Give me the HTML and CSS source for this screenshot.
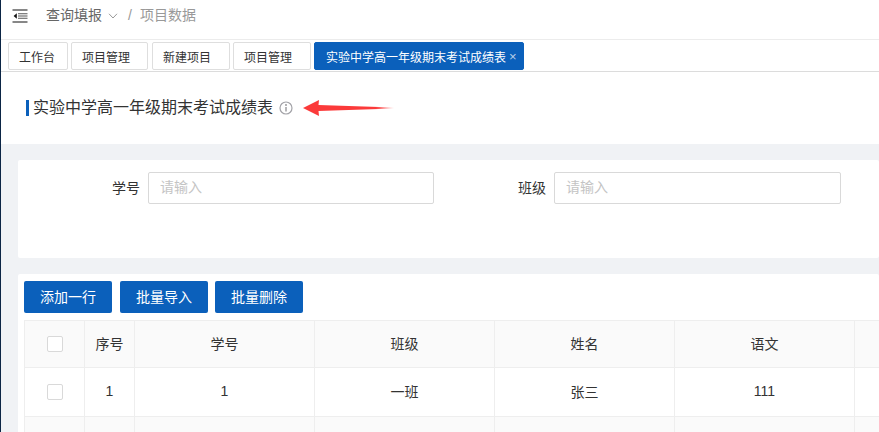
FILE: index.html
```html
<!DOCTYPE html>
<html lang="zh">
<head>
<meta charset="utf-8">
<title>实验中学高一年级期末考试成绩表</title>
<link rel="stylesheet" href="styles.css">
</head>
<body>
<div class="page">
  <header class="topbar">
    <svg class="menu-icon" width="16" height="14" viewBox="0 0 16 14"><path d="M.5 1h15M.5 13h15" stroke="#111" stroke-width="1.200" fill="none"/><path d="M6 4.800h9.500M6 7h9.500M6 9.200h9.500" stroke="#555" stroke-width="1.100" fill="none"/><path d="M4.800 4.200 1.600 7l3.200 2.800z" fill="#111"/></svg>
    <span class="crumb">查询填报</span>
    <svg class="chevron" width="10" height="6" viewBox="0 0 10 6"><path d="M1 .8 5 5 9 .8" stroke="#999" stroke-width="1" fill="none"/></svg>
    <span class="sep">/</span>
    <span class="crumb-current">项目数据</span>
  </header>
  <nav class="tabs">
    <span class="tab tab-a">工作台</span>
    <span class="tab tab-b">项目管理</span>
    <span class="tab tab-c">新建项目</span>
    <span class="tab tab-c">项目管理</span>
    <span class="tab tab-active">实验中学高一年级期末考试成绩表<i class="close">×</i></span>
  </nav>
  <section class="title-row">
    <h1 class="title">实验中学高一年级期末考试成绩表</h1>
    <svg class="info" width="14" height="14" viewBox="0 0 14 14"><circle cx="7" cy="7" r="6" stroke="#a3a3a8" stroke-width="1.200" fill="none"/><path d="M7 6v4.400" stroke="#8f8f94" stroke-width="1.300"/><circle cx="7" cy="4" r=".9" fill="#8f8f94"/></svg>
    <svg class="arrow" width="92" height="18" viewBox="0 0 92 18">
      <defs><linearGradient id="fade" x1="0" x2="1" y1="0" y2="0"><stop offset="0" stop-color="#fb3a3a"/><stop offset=".8" stop-color="#fb3a3a"/><stop offset="1" stop-color="#fb3a3a" stop-opacity="0"/></linearGradient></defs>
      <path d="M0 9 16 1 15.500 6 91 8.500 91 9.500 15.500 12 16 17z" fill="url(#fade)"/>
    </svg>
  </section>
  <main class="content">
    <section class="card search">
      <div class="field field-first">
        <label class="label">学号</label>
        <input class="input" placeholder="请输入">
      </div>
      <div class="field field-second">
        <label class="label">班级</label>
        <input class="input" placeholder="请输入">
      </div>
    </section>
    <section class="card list">
      <div class="actions">
        <button class="btn">添加一行</button>
        <button class="btn">批量导入</button>
        <button class="btn">批量删除</button>
      </div>
      <table class="table">
        <colgroup><col class="c-check"><col class="c-no"><col class="c-wide"><col class="c-wide"><col class="c-wide"><col class="c-wide"><col class="c-wide"></colgroup>
        <thead>
          <tr class="head"><th><span class="check"></span></th><th>序号</th><th>学号</th><th>班级</th><th>姓名</th><th>语文</th><th></th></tr>
        </thead>
        <tbody>
          <tr class="row"><td><span class="check"></span></td><td>1</td><td>1</td><td>一班</td><td>张三</td><td>111</td><td></td></tr>
          <tr class="row stripe"><td></td><td></td><td></td><td></td><td></td><td></td><td></td></tr>
        </tbody>
      </table>
    </section>
  </main>
</div>
</body>
</html>
```
FILE: styles.css
```css
* { box-sizing: border-box; }
html, body { margin: 0; height: 100%; overflow: hidden; }
body { background: #fff; font-family: "Liberation Sans", "Noto Sans CJK SC", sans-serif; font-size: 14px; color: #333; }
.page { width: 879px; height: 432px; overflow: hidden; border-left: 1px solid #0b2545; }

.topbar { height: 40px; display: flex; align-items: center; border-bottom: 1px solid #ececec; padding: 0 0 7px 11px; color: #666; }
.menu-icon { margin-right: 18px; }
.crumb { color: #666; font-size: 14px; line-height: 18px; margin-top: -2px; }
.chevron { margin-left: 6px; }
.sep { margin: -2px 8px 0 10px; color: #999; font-size: 14px; }
.crumb-current { color: #999; font-size: 14px; line-height: 18px; margin-top: -2px; }

.tabs { height: 32px; display: flex; align-items: flex-start; padding: 2px 0 0 7px; border-bottom: 1px solid #dcdcdc; }
.tab { height: 28px; display: flex; align-items: center; justify-content: flex-start; border: 1px solid #dedede; border-radius: 2px; font-size: 12px; color: #333; flex: none; padding-left: 10px; }
.tab-a { width: 60px; margin-right: 3px; }
.tab-b { width: 77px; margin-right: 4px; }
.tab-c { width: 78px; margin-right: 3px; }
.tab-active { width: 210px; background: #0b60bb; border-color: #0b60bb; color: #fff; padding-left: 11px; }
.close { font-style: normal; font-size: 13px; line-height: 13px; color: #b9cfe8; margin-left: 3px; }

.title-row { height: 72px; display: flex; align-items: center; padding: 0 0 0 25px; }
.title { margin: 0; font-size: 16px; font-weight: 400; line-height: 16px; color: #333; border-left: 3px solid #0b60bb; padding-left: 4px; height: 16px; display: flex; align-items: center; }
.info { margin-left: 6px; }
.arrow { margin-left: 10px; }

.content { background: #f0f2f5; height: 288px; padding: 16px 0 0 17px; display: flex; flex-direction: column; gap: 16px; }
.card { background: #fff; border-radius: 2px; flex: none; }
.search { height: 98px; padding-top: 12px; display: flex; align-items: flex-start; }
.field { display: flex; align-items: center; }
.field-first { width: 416px; padding-left: 94px; }
.field-second { margin-left: 5px; padding-left: 79px; }
.label { font-size: 14px; color: #333; width: 28px; margin-right: 8px; white-space: nowrap; padding-bottom: 2px; }
.input { width: 286px; height: 32px; border: 1px solid #d9d9d9; border-radius: 2px; padding: 0 11px 2px; font: inherit; font-size: 14px; outline: none; background: #fff; }
.input::placeholder { color: #c4c4c4; opacity: 1; }
.field-second .input { width: 287px; }

.list { height: 200px; padding: 7px 0 0 6px; }
.actions { display: flex; gap: 8px; margin-bottom: 7px; }
.actions .btn:last-child { margin-left: -1px; }
.btn { width: 88px; height: 32px; border: 0; border-radius: 2px; background: #0b60bb; color: #fff; font: inherit; font-size: 14px; padding: 0 0 2px; }

.table { table-layout: fixed; width: 1010px; border-collapse: collapse; font-size: 14px; color: #333; }
.c-check { width: 60px; }
.c-no { width: 50px; }
.c-wide { width: 180px; }
.table th, .table td { border: 1px solid #eeeeee; padding: 0 0 2px; text-align: center; font-weight: 400; }
.head { height: 47px; background: #fafafa; }
.row { height: 49px; }
.stripe { background: #fafafa; }
.check { display: block; width: 16px; height: 16px; margin: 2px auto 0; border: 1px solid #d9d9d9; border-radius: 2px; background: #fff; }
```
